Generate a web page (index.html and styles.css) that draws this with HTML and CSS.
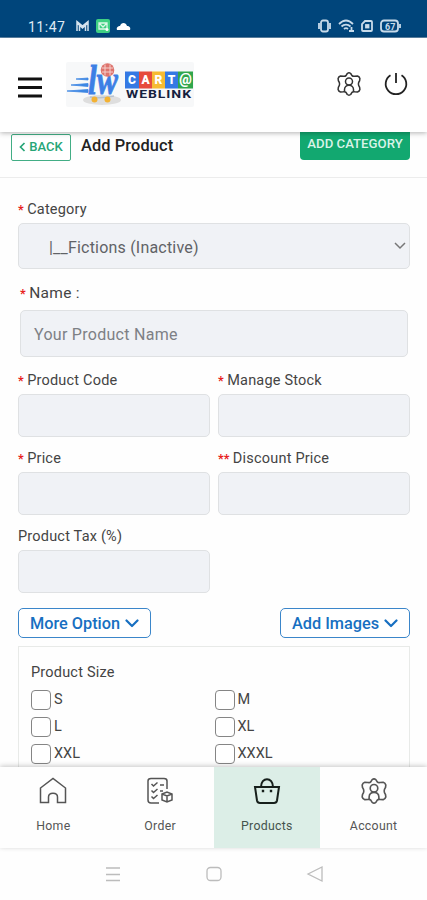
FILE: index.html
```html
<!DOCTYPE html>
<html lang="en">
<head>
<meta charset="utf-8">
<title>Add Product</title>
<link rel="stylesheet" href="styles.css">
</head>
<body>
<svg class="defs" width="0" height="0">
  <symbol id="gear" viewBox="0 0 24 24"><g fill="none" stroke="currentColor" stroke-width="1.500" stroke-linejoin="round"><path d="M9 3.600L10.300 1.500Q12 .2 13.700 1.500L15 3.600Q16 4.600 17.500 4.200L20.500 4Q22.400 4.600 22.900 6.500L22.600 8.800Q21.400 10.400 21.400 12Q21.400 13.600 22.600 15.200L22.900 17.500Q22.400 19.400 20.500 20L17.500 19.800Q16 19.400 15 20.400L13.700 22.500Q12 23.800 10.300 22.500L9 20.400Q8 19.400 6.500 19.800L3.500 20Q1.600 19.400 1.100 17.500L1.400 15.200Q2.600 13.600 2.600 12Q2.600 10.400 1.400 8.800L1.100 6.500Q1.600 4.600 3.500 4L6.500 4.200Q8 4.600 9 3.600Z"/><circle cx="12" cy="9.500" r="3.500"/><path d="M7.500 19.500V17.500C7.500 11.800 16.500 11.800 16.500 17.500V19.500"/></g></symbol>
  <symbol id="chev" viewBox="0 0 14 9"><path d="M1.500 1.500L7 7L12.500 1.500" fill="none" stroke="currentColor" stroke-width="2.200" stroke-linecap="round" stroke-linejoin="round"/></symbol>
</svg>
<div class="screen">
  <div class="status">
    <span class="time">11:47</span>
    <svg class="st-left" width="56" height="16" viewBox="0 0 56 16">
      <path d="M2 13V3.500L7.500 8L13 3.500V13M2 5L7.500 10L13 5M4.500 6V13M10.500 6V13" fill="none" stroke="#d5e3ee" stroke-width="1.500"/>
      <rect x="21" y="1" width="14" height="14" rx="2" fill="#3fd083"/><path d="M24 5H32V11H24ZM24 5L28 9L32 5" fill="none" stroke="#dcf8e8" stroke-width="1.300"/><circle cx="32" cy="11.500" r="1.500" fill="#fff"/>
      <path d="M42 12C41 9 43.500 8 45 8C46 4 51 4 52 8C54.500 8 56 10 55 12Z" fill="#fff"/>
    </svg>
    <svg class="st-right" width="86" height="16" viewBox="0 0 86 16" fill="none" stroke="#c8dbea" stroke-width="1.800">
      <rect x="5" y="2.500" width="7" height="11" rx="2"/><path d="M3 5V11M14 5V11"/>
      <path d="M23 6C27.500 1.500 32.500 1.500 37 6M25.500 8.500C28 6 32 6 34.500 8.500M28 11C29.500 9.700 30.500 9.700 32 11M35.500 9V14M33 13H38"/>
      <path d="M49 3H55Q56 3 56 4V12Q56 13 55 13H47Q46 13 46 12V6Z"/><rect x="50" y="7" width="2.500" height="2.500" fill="#c8dbea"/>
      <rect x="65" y="2.500" width="17" height="11" rx="3"/><path d="M84 6V10"/><text x="69" y="11.500" class="batt">67</text>
    </svg>
  </div>

  <header class="header">
    <svg class="burger" width="24" height="22" viewBox="0 0 24 22"><path d="M0 2H24M0 10.500H24M0 19H24" stroke="#111" stroke-width="3"/></svg>
    <svg class="logo" width="128" height="46" viewBox="0 0 128 46">
      <rect width="128" height="45" rx="2" fill="#f7f8f9"/>
      <ellipse cx="36" cy="38" rx="19" ry="5" fill="#dedede"/>
      <path d="M10 17L22 16V18ZM5 23L22 21.500V24.500ZM1 29L22 27.500V30.500Z" fill="#3d86e3" stroke="#3d86e3" stroke-width=".8"/>
      <text x="22" y="32" textLength="30" lengthAdjust="spacingAndGlyphs" class="mark">lw</text>
      <path d="M24 35Q35 37 48 34" fill="none" stroke="#b9c3cf" stroke-width="1.500"/>
      <circle cx="28.500" cy="37.500" r="3" fill="#f3b233"/><circle cx="41.500" cy="37.500" r="3" fill="#f3b233"/>
      <circle cx="41.500" cy="8" r="6.800" fill="#de746e"/><path d="M36 6H47M36 10H47M39 2.500V13.500M44 2.500V13.500" stroke="#f5cfcb" stroke-width="1"/>
      <rect x="59" y="9.500" width="14" height="17" fill="#3479e4"/><rect x="73" y="9.500" width="13" height="17" fill="#e64b3c"/><rect x="86" y="9.500" width="13" height="17" fill="#f6bb32"/><rect x="99" y="9.500" width="13" height="17" fill="#3479e4"/><rect x="112" y="9.500" width="15" height="17" fill="#30a64c"/>
      <g class="tile"><text x="66" y="22">C</text><text x="79.500" y="22">A</text><text x="92.500" y="22">R</text><text x="105.500" y="22">T</text><text x="119.500" y="21.500" class="at">@</text></g>
      <text x="60" y="35.500" textLength="66" lengthAdjust="spacingAndGlyphs" class="web">WEBLINK</text>
    </svg>
    <svg class="h-gear" width="24" height="24"><use href="#gear"/></svg>
    <svg class="power" width="24" height="24" viewBox="0 0 24 24"><path d="M6.500 3.200A10.300 10.300 0 1 0 17.500 3.200M12 1V11" fill="none" stroke="#222" stroke-width="1.800"/></svg>
  </header>

  <main class="main">
    <div class="titlebar">
      <button class="back"><svg width="7" height="10" viewBox="0 0 7 10"><path d="M5.500 1L1.500 5L5.500 9" fill="none" stroke="currentColor" stroke-width="1.700"/></svg>BACK</button>
      <h1>Add Product</h1>
      <button class="addcat">ADD CATEGORY</button>
    </div>
    <form class="form">
      <label class="label"><i>*</i>Category</label>
      <div class="field select"><span>|__Fictions (Inactive)</span><svg width="12" height="8" viewBox="0 0 12 8"><path d="M1 1L6 6L11 1" fill="none" stroke="#777" stroke-width="1.500"/></svg></div>
      <div class="namegroup">
        <label class="label big"><i>*</i>Name :</label>
        <div class="field name">Your Product Name</div>
      </div>
      <div class="grid">
        <div><label class="label"><i>*</i>Product Code</label><div class="field"></div></div>
        <div><label class="label"><i>*</i>Manage Stock</label><div class="field"></div></div>
        <div><label class="label"><i>*</i>Price</label><div class="field"></div></div>
        <div><label class="label"><i>**</i>Discount Price</label><div class="field"></div></div>
        <div><label class="label">Product Tax (%)</label><div class="field"></div></div>
      </div>
      <div class="actions">
        <button class="outline more" type="button">More Option<svg width="14" height="9"><use href="#chev"/></svg></button>
        <button class="outline images" type="button">Add Images<svg width="14" height="9"><use href="#chev"/></svg></button>
      </div>
      <section class="panel">
        <div class="label">Product Size</div>
        <div class="sizes">
          <div class="size"><b></b>S</div><div class="size"><b></b>M</div>
          <div class="size"><b></b>L</div><div class="size"><b></b>XL</div>
          <div class="size"><b></b>XXL</div><div class="size"><b></b>XXXL</div>
        </div>
      </section>
    </form>
  </main>

  <nav class="tabs">
    <div class="tab"><svg width="28" height="28" viewBox="0 0 28 28"><path d="M1.500 11L14 1.500L26.500 11V25.500H18.500V20C18.500 15 9.500 15 9.500 20V25.500H1.500Z" fill="none" stroke="#555" stroke-width="1.500"/></svg><span>Home</span></div>
    <div class="tab"><svg width="28" height="28" viewBox="0 0 28 28" fill="none" stroke="#555" stroke-width="1.500"><path d="M13 26H5Q2 26 2 23V4Q2 1.500 5 1.500H18Q21 1.500 21 4V12"/><path d="M5.500 7L7.500 9L11.500 5.500M14 8H18M5.500 13.500L7.500 15.500L11.500 12M14 14H17M5.500 19.500L7.500 21.500L11.500 18"/><path d="M16 17L21 15L26 17V23L21 25L16 23ZM16 17L21 19L26 17M21 19V25"/></svg><span>Order</span></div>
    <div class="tab active"><svg width="28" height="28" viewBox="0 0 28 28" fill="none" stroke="#161f1b" stroke-width="2"><path d="M2 10H26L24 23.500Q23.500 26 21 26H7Q4.500 26 4 23.500ZM8 10C8 -.5 20 -.5 20 10"/><path d="M8.800 14H11.200M16.800 14H19.200" stroke-width="2.500"/></svg><span>Products</span></div>
    <div class="tab"><svg class="account" width="26" height="28" viewBox="0 0 26 28"><use href="#gear" width="26" height="28"/></svg><span>Account</span></div>
  </nav>
  <div class="sysnav">
    <svg width="16" height="16" viewBox="0 0 16 16"><path d="M1 2H15M1 8.500H15M1 14.500H15"/></svg>
    <svg width="16" height="16" viewBox="0 0 16 16"><rect x="1" y="1.500" width="14" height="13" rx="3.500"/></svg>
    <svg width="16" height="16" viewBox="0 0 16 16"><path d="M1 8L15 1V15Z"/></svg>
  </div>
</div>
</body>
</html>
```
FILE: styles.css
```css
* { box-sizing: border-box; }
body { margin: 0; background: #fefefe; font-family: Roboto, "Liberation Sans", sans-serif; color: #444; }
button { font-family: inherit; margin: 0; padding: 0; }
svg { display: block; flex: none; overflow: visible; }
.defs { position: absolute; }
.screen { width: 427px; height: 900px; display: flex; flex-direction: column; overflow: hidden; }

.status { height: 38px; flex: none; background: #00457b; display: flex; align-items: flex-start; padding: 18px 25px 0 28px; border-bottom: 1px solid #5f88ab; }
.time { width: 37px; font-size: 14px; line-height: 18px; letter-spacing: .5px; color: #dfeaf3; white-space: nowrap; }
.st-left { margin-left: 10px; }
.st-right { margin-left: auto; }
.batt { font-size: 9px; font-weight: 700; fill: #c8dbea; stroke: none; }

.header { position: relative; z-index: 2; height: 94px; flex: none; background: #fff; display: flex; align-items: flex-start; padding: 24px 19px 0 18px; box-shadow: 0 1px 5px rgba(0,0,0,.3); }
.burger { margin-top: 15px; }
.logo { margin-left: 24px; }
.mark { font-family: "Liberation Serif", serif; font-style: italic; font-weight: 700; font-size: 42px; fill: #3d7fe5; stroke: #3d7fe5; stroke-width: .8; }
.tile { font-size: 12px; font-weight: 900; fill: #fff; text-anchor: middle; }
.at { font-size: 14px; }
.web { font-size: 11.500px; font-weight: 700; letter-spacing: .8px; fill: #15213e; }
.h-gear { margin: 10px 0 0 auto; color: #333; }
.power { margin: 10px 0 0 23px; }

.main { height: 635px; flex: none; overflow: hidden; }
.titlebar { display: flex; align-items: flex-start; height: 46px; padding: 0 17px 0 11px; border-bottom: 1px solid #ececec; }
.back { display: flex; align-items: center; justify-content: center; gap: 3px; width: 60px; height: 27px; margin-top: 2px; padding-bottom: 2px; border: 1px solid #42ad85; border-radius: 2px; background: #fff; color: #27a577; font-size: 13px; font-weight: 500; }
h1 { margin: 4px 0 0 10px; font-size: 16.400px; line-height: 20px; font-weight: 500; color: #222; letter-spacing: .1px; }
.addcat { width: 110px; height: 28px; margin-left: auto; padding-bottom: 6px; border: 0; border-radius: 0 0 4px 4px; background: #12a870; color: #d9f3e8; font-size: 13.200px; font-weight: 500; white-space: nowrap; }

.form { padding: 22px 17px 0 18px; }
.label { display: block; height: 20px; font-size: 14.500px; line-height: 20px; letter-spacing: .2px; white-space: nowrap; }
.label i { color: #e82020; font-size: 12.500px; font-style: normal; font-weight: 700; margin-right: 3.500px; letter-spacing: 0; }
.field { background: #f0f2f6; border: 1px solid #dfe1e3; border-radius: 5px; }
.select { height: 46px; margin-top: 3px; padding: 0 3px 0 30px; display: flex; align-items: center; justify-content: space-between; font-size: 16px; color: #606266; letter-spacing: .2px; }
.select span { padding-top: 2px; }
.namegroup { padding: 14px 2px 0; }
.label.big { font-size: 15.500px; letter-spacing: .3px; }
.field.name { height: 47px; margin-top: 7px; padding-left: 13px; font-size: 16px; line-height: 47px; color: #7d8085; letter-spacing: .28px; }
.grid { display: grid; grid-template-columns: 1fr 1fr; column-gap: 8px; row-gap: 12px; margin-top: 14px; }
.grid .field { height: 43px; margin-top: 3px; }
.actions { display: flex; justify-content: space-between; margin-top: 15px; }
.outline { display: flex; align-items: center; justify-content: center; gap: 5px; height: 30px; border: 1px solid #3b86ca; border-radius: 5px; background: #fff; color: #176fc1; font-size: 16.300px; font-weight: 500; white-space: nowrap; }
.more { width: 133px; }
.images { width: 130px; }
.panel { height: 160px; margin-top: 8px; padding: 16px 0 0 12px; border: 1px solid #e8eae8; }
.sizes { display: grid; grid-template-columns: 183.500px 1fr; grid-auto-rows: 27px; margin-top: 3px; }
.size { display: flex; align-items: center; gap: 3px; font-size: 14.500px; }
.size b { width: 20px; height: 20px; border: 1px solid #858585; border-radius: 4px; background: #fff; }

.tabs { position: relative; z-index: 2; height: 81px; flex: none; display: grid; grid-template-columns: repeat(4, 1fr); background: #fefefe; box-shadow: 0 -1px 5px rgba(0,0,0,.22); }
.tab { display: flex; flex-direction: column; align-items: center; padding-top: 10px; font-size: 12.300px; letter-spacing: .3px; color: #555; }
.tab span { margin-top: 13px; line-height: 16px; }
.tab.active { background: #dceee7; color: #44534d; }
.sysnav { flex: 1; display: flex; justify-content: center; gap: 85px; padding-top: 18px; background: #fefefe; }
.sysnav svg { fill: none; stroke: #bcbcbc; stroke-width: 1.300; }
```
